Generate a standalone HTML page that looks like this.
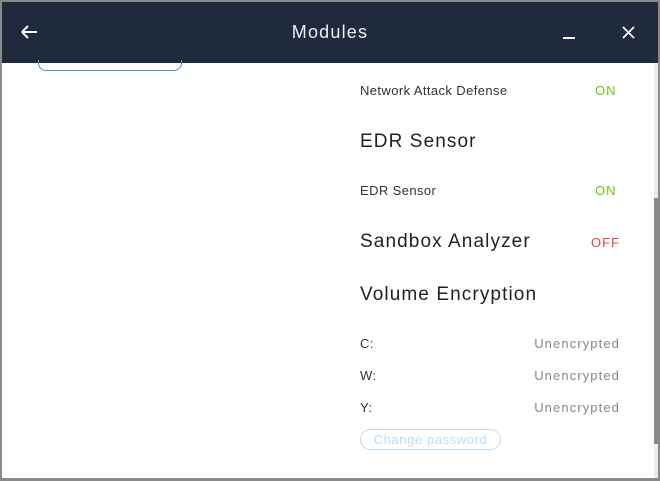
<!DOCTYPE html>
<html><head><style>
*{margin:0;padding:0;box-sizing:border-box}
body{width:660px;height:481px;overflow:hidden;background:#8a8a8a;font-family:"Liberation Sans",sans-serif;position:relative}
.win{position:absolute;left:2px;top:2px;width:656px;height:476px;background:#fff;overflow:hidden}
.hdr{position:absolute;left:0;top:0;width:656px;height:61px;background:#1f2a3d;color:#fff}
.t{position:absolute;left:0;width:656px;text-align:center;top:20px;font-size:18px;color:#f0f0f0;letter-spacing:1.2px}
.a{position:absolute;font-size:13px;color:#333;letter-spacing:0.4px}
.h{position:absolute;font-size:19px;color:#222;letter-spacing:1.1px}
.g{color:#6dc60f}
.r{color:#f0404a}
.u{color:#888;letter-spacing:1.1px;right:38px}
</style></head><body>
<div class="win">
<div class="hdr">
<svg style="position:absolute;left:18px;top:22px" width="18" height="16"><path d="M2 8H17M2 8L8 2M2 8L8 14" stroke="#fff" stroke-width="2" fill="none"/></svg>
<div class="t">Modules</div>
<div style="position:absolute;left:561px;top:35px;width:12px;height:2px;background:#fff"></div>
<svg style="position:absolute;left:620px;top:24px" width="13" height="13"><path d="M1 1L12 12M12 1L1 12" stroke="#fff" stroke-width="1.8"/></svg>
</div>
<div style="position:absolute;left:36px;top:58px;width:144px;height:11px;border:1px solid #4a90d9;border-top:none;border-radius:0 0 8px 8px"></div>
<div class="a" style="left:358px;top:81px">Network Attack Defense</div>
<div class="a g" style="left:593px;top:81px;letter-spacing:1px">ON</div>
<div class="h" style="left:358px;top:129px">EDR Sensor</div>
<div class="a" style="left:358px;top:181px">EDR Sensor</div>
<div class="a g" style="left:593px;top:181px;letter-spacing:1px">ON</div>
<div class="h" style="left:358px;top:229px">Sandbox Analyzer</div>
<div class="a r" style="left:589px;top:233px;letter-spacing:1px">OFF</div>
<div class="h" style="left:358px;top:282px">Volume Encryption</div>
<div class="a" style="left:358px;top:334px">C:</div>
<div class="a u" style="top:334px">Unencrypted</div>
<div class="a" style="left:358px;top:366px">W:</div>
<div class="a u" style="top:366px">Unencrypted</div>
<div class="a" style="left:358px;top:398px">Y:</div>
<div class="a u" style="top:398px">Unencrypted</div>
<div style="position:absolute;left:358px;top:427px;width:141px;height:21px;border:1px solid #bcdcf5;border-radius:11px;color:#bcdcf5;font-size:13px;text-align:center;line-height:19px;letter-spacing:0.6px">Change password</div>
<div style="position:absolute;left:652px;top:61px;width:4px;height:415px;background:#ececec"></div>
<div style="position:absolute;left:652px;top:196px;width:4px;height:246px;background:#8a8a8a"></div>
</div>
</body></html>
